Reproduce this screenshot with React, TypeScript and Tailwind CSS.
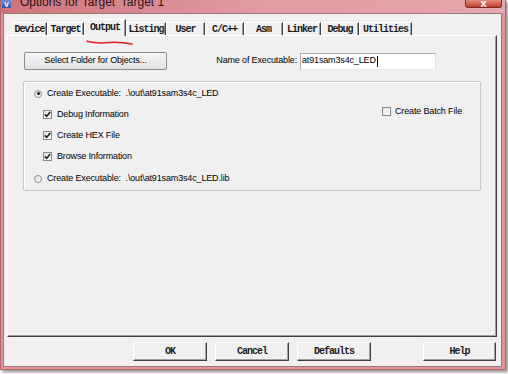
import React from "react";

const TABS = [
  { label: "Device", w: "w-[35px]" },
  { label: "Target", w: "w-[37px]" },
  { label: "Output", w: "w-[42px]", active: true },
  { label: "Listing", w: "w-[40px]" },
  { label: "User", w: "w-[39px]" },
  { label: "C/C++", w: "w-[39px]" },
  { label: "Asm", w: "w-[39px]" },
  { label: "Linker", w: "w-[38px]" },
  { label: "Debug", w: "w-[38px]" },
  { label: "Utilities", w: "w-[53px]" },
];

const sans = "font-['Liberation_Sans',sans-serif] text-[9px] tracking-[-0.15px] text-black";
const mono = "font-['Liberation_Mono',monospace] text-[10px] font-bold tracking-[-1px] text-[#1a1a1a]";

function CheckBox({ checked }: { checked?: boolean }) {
  return (
    <span className="flex h-[9px] w-[9px] shrink-0 items-center justify-center border border-[#8a8a8a] bg-gradient-to-br from-[#e4e4e4] to-white">
      {checked && (
        <svg width="7" height="7" viewBox="0 0 7 7">
          <path d="M0.8 3.4 L2.7 5.4 L6.2 1" fill="none" stroke="#1a1a1a" strokeWidth="1.6" />
        </svg>
      )}
    </span>
  );
}

function Radio({ checked }: { checked?: boolean }) {
  return (
    <span className="flex h-[8px] w-[8px] shrink-0 items-center justify-center rounded-full border border-[#8a8a8a] bg-gradient-to-br from-[#e0e0e0] to-white">
      {checked && <span className="h-[3px] w-[3px] rounded-full bg-[#111]" />}
    </span>
  );
}

function DlgButton({ label, w }: { label: string; w: string }) {
  return (
    <div
      className={`${w} ${mono} flex h-[19px] items-center justify-center border border-t-white border-l-white border-r-[#404040] border-b-[#404040] bg-[#f0f0f0] shadow-[inset_-1px_-1px_#a0a0a0]`}
    >
      {label}
    </div>
  );
}

export default function App() {
  return (
    <div className="relative h-[374px] w-[508px] overflow-hidden bg-white">
      <div className="flex h-[370px] w-[506px] flex-col border border-t-0 border-[#b4646c] bg-[#e0959d] shadow-[2px_2px_3px_rgba(0,0,0,0.45)]">
        {/* title bar */}
        <div className="relative flex h-[13px] shrink-0 items-start overflow-hidden bg-gradient-to-r from-[#cf737d] via-[#e19aa2] to-[#e6a7ae]">
          <div className="ml-[1px] flex h-[8px] w-[9px] items-center justify-center bg-gradient-to-b from-[#6f8fd8] to-[#3456a8] text-[7px] leading-none font-bold text-white">
            V
          </div>
          <span className="-mt-[5px] ml-[9px] font-['Liberation_Sans',sans-serif] text-[12px] leading-[14px] text-[#2a1517]">
            Options for Target 'Target 1'
          </span>
          <div className="ml-auto mr-[3px] flex h-[8px] w-[37px] items-end justify-center overflow-hidden rounded-b-[3px] border border-t-0 border-[#7a2a24] bg-gradient-to-b from-[#e08a7e] to-[#c2402f]">
            <span className="-mb-[2px] font-['Liberation_Sans',sans-serif] text-[11px] font-bold leading-[12px] text-white">x</span>
          </div>
        </div>

        {/* client */}
        <div className="mb-[2px] ml-[2px] mr-[3px] flex flex-1 flex-col border border-[#9c7479] bg-[#f0f0f0] pt-[5px]">
          {/* tabs */}
          <div className="relative z-10 flex h-[16px] items-end pl-[8px]">
            {TABS.map((t) =>
              t.active ? (
                <div
                  key={t.label}
                  className={`${t.w} ${mono} -mb-[1px] flex h-[17px] items-center justify-center border-l border-t border-r border-l-white border-t-white border-r-[#404040] bg-[#f0f0f0] pb-[1px] shadow-[inset_-1px_0_#a0a0a0]`}
                >
                  {t.label}
                </div>
              ) : (
                <div
                  key={t.label}
                  className={`${t.w} ${mono} flex h-[13px] items-center justify-center border-l border-t border-r border-l-white border-t-white border-r-[#404040] shadow-[inset_-1px_0_#a0a0a0]`}
                >
                  {t.label}
                </div>
              )
            )}
          </div>

          {/* panel */}
          <div className="ml-[3px] flex h-[302px] w-[490px] flex-col border border-t-white border-l-white border-r-[#404040] border-b-[#404040] shadow-[inset_-1px_-1px_#a0a0a0]">
            <div className="flex items-center pl-[16px] pt-[16px]">
              <div
                className={`${sans} flex h-[18px] w-[143px] items-center justify-center rounded-[2px] border border-[#8c8c8c] bg-gradient-to-b from-[#f6f6f6] to-[#e2e2e2]`}
              >
                Select Folder for Objects...
              </div>
              <span className={`${sans} w-[130px] text-right`}>Name of Executable:</span>
              <div
                className={`${sans} ml-[3px] flex h-[17px] w-[136px] items-center border border-[#abadb3] border-b-[#e3e9ef] border-r-[#dbdfe6] bg-white pl-[1px]`}
              >
                at91sam3s4c_LED
                <span className="ml-[1px] h-[11px] w-[1px] bg-black" />
              </div>
            </div>

            {/* group box */}
            <div className="ml-[15px] mt-[11px] flex h-[110px] w-[458px] rounded-[2px] border border-[#c4c9cc] shadow-[inset_1px_1px_white]">
              <div className="flex flex-1 flex-col pt-[1px]">
                <div className="flex h-[21px] items-center gap-[5px] pl-[10px]">
                  <Radio checked />
                  <span className={sans}>Create Executable:&nbsp; .\out\at91sam3s4c_LED</span>
                </div>
                <div className="flex h-[21px] items-center gap-[5px] pl-[19px]">
                  <CheckBox checked />
                  <span className={sans}>Debug Information</span>
                </div>
                <div className="flex h-[21px] items-center gap-[5px] pl-[19px]">
                  <CheckBox checked />
                  <span className={sans}>Create HEX File</span>
                </div>
                <div className="flex h-[21px] items-center gap-[5px] pl-[19px]">
                  <CheckBox checked />
                  <span className={sans}>Browse Information</span>
                </div>
                <div className="mt-[3px] flex h-[18px] items-center gap-[5px] pl-[10px]">
                  <Radio />
                  <span className={sans}>Create Executable:&nbsp; .\out\at91sam3s4c_LED.lib</span>
                </div>
              </div>
              <div className="w-[98px] pt-[23px]">
                <div className="flex items-center gap-[4px]">
                  <CheckBox />
                  <span className={sans}>Create Batch File</span>
                </div>
              </div>
            </div>
          </div>

          {/* dialog buttons */}
          <div className="mt-[5px] flex gap-[8px] pl-[129px]">
            <DlgButton label="OK" w="w-[74px]" />
            <DlgButton label="Cancel" w="w-[74px]" />
            <DlgButton label="Defaults" w="w-[74px]" />
            <div className="ml-[44px]">
              <DlgButton label="Help" w="w-[73px]" />
            </div>
          </div>
        </div>
      </div>

      {/* hand-drawn red underline under the Output tab */}
      <svg className="pointer-events-none absolute left-[84px] top-[38px]" width="52" height="10" viewBox="0 0 52 10">
        <path d="M3 3.2 C10 5, 16 5.4, 24 4.6 C32 4, 38 4.2, 48 6" fill="none" stroke="#e0201c" strokeWidth="1.5" strokeLinecap="round" />
      </svg>
    </div>
  );
}
